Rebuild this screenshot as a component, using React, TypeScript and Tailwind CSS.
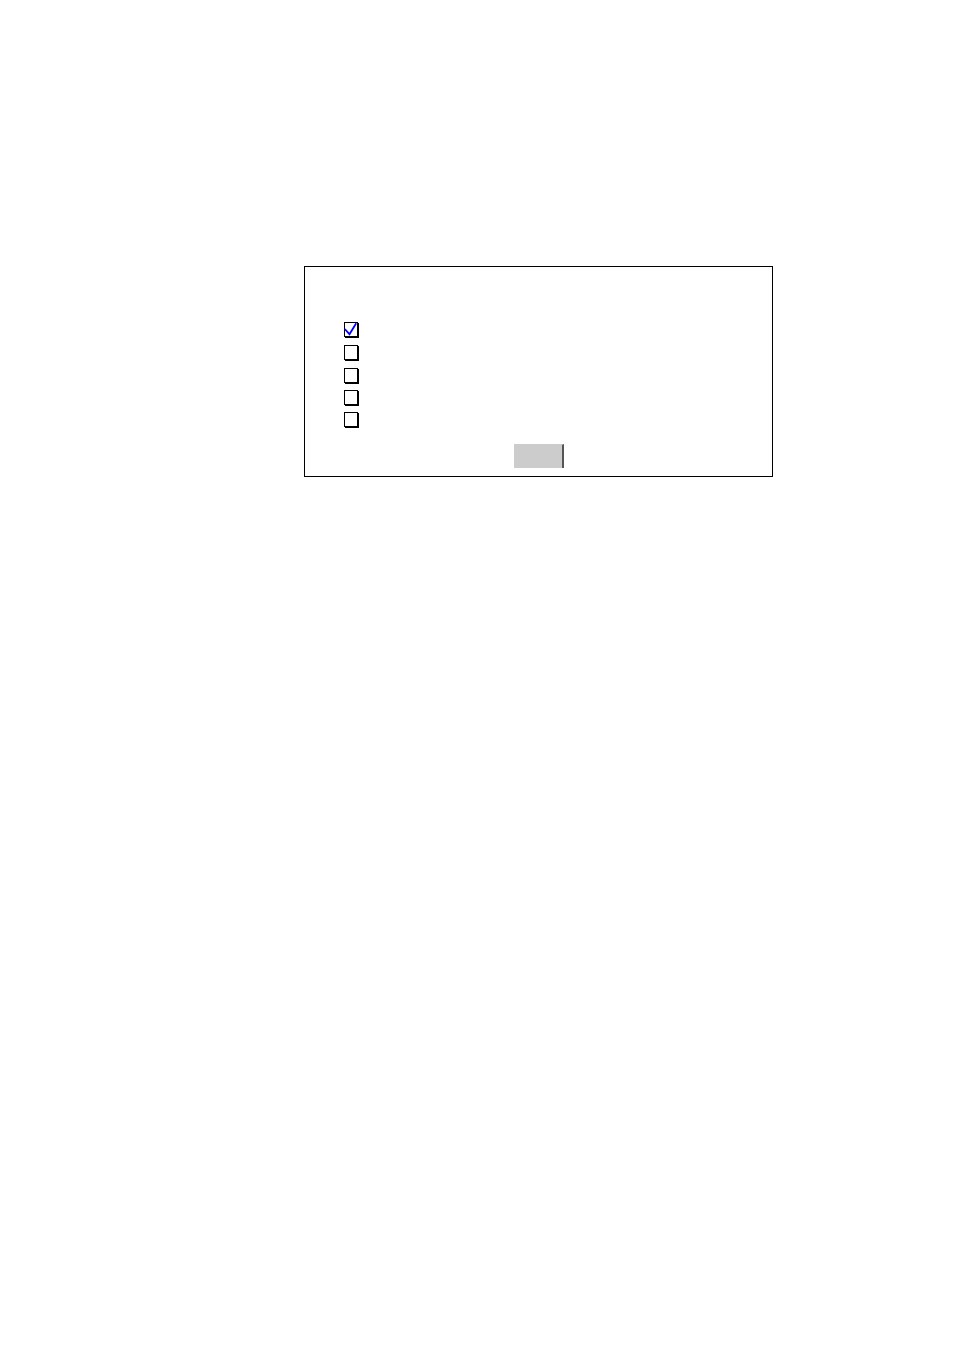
import React, { useState } from 'react';

const OPTION_GROUPS = [
  { id: 'first', className: 'flex flex-col gap-2', options: [1, 2, 3] },
  { id: 'second', className: 'flex flex-col gap-[7px]', options: [4, 5] }
];

type OptionBoxProps = {
  option: number;
  checked: boolean;
  onToggle: (option: number) => void;
};

function OptionBox({ option, checked, onToggle }: OptionBoxProps) {
  return (
    <label className="relative block h-[15px] w-[14px]">
      <input
        type="checkbox"
        name={`option-${option}`}
        aria-label={`Option ${option}`}
        checked={checked}
        onChange={() => onToggle(option)}
        className="block h-[15px] w-[14px] appearance-none border border-black bg-white shadow-[1px_1px_0_#000]"
      />
      {checked && (
        <svg
          viewBox="0 0 14 15"
          fill="none"
          aria-hidden="true"
          className="pointer-events-none absolute inset-0 h-[15px] w-[14px]"
        >
          <path d="M0.8 7 L5.5 12.2 L12.2 1.2" stroke="#0000ff" strokeWidth="1.8" />
        </svg>
      )}
    </label>
  );
}

export default function App() {
  const [selected, setSelected] = useState<number[]>([1]);

  const toggle = (option: number) => {
    setSelected((prev) => (prev.includes(option) ? prev.filter((o) => o !== option) : [...prev, option]));
  };

  return (
    <main className="min-h-screen bg-white pt-[266px] pr-[181px] pl-76">
      <form
        onSubmit={(e) => e.preventDefault()}
        className="flex flex-col items-center border border-black pt-[55px] pb-2"
      >
        {/* options */}
        <div className="flex flex-col gap-[7px] self-stretch pl-[39px]">
          {OPTION_GROUPS.map((group) => (
            <div key={group.id} className={group.className}>
              {group.options.map((option) => (
                <OptionBox key={option} option={option} checked={selected.includes(option)} onToggle={toggle} />
              ))}
            </div>
          ))}
        </div>

        <button
          type="submit"
          aria-label="Submit"
          className="mt-[17px] h-6 w-[50px] border-t border-r-2 border-t-[#cccccc] border-r-[#555555] bg-[#cccccc]"
        />
      </form>
    </main>
  );
}
